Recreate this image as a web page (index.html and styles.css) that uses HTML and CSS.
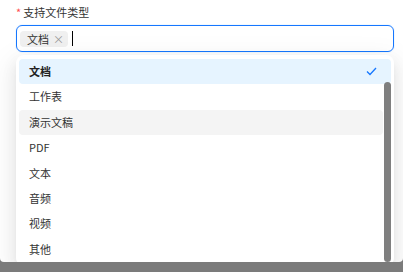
FILE: index.html
```html
<!DOCTYPE html>
<html lang="zh-CN">
<head>
    <meta charset="UTF-8">
    <title>支持文件类型</title>
    <link rel="stylesheet" href="styles.css">
</head>
<body>
    <div class="panel">
        <div class="form-item">
            <label class="form-label"><span class="required">*</span>支持文件类型</label>
            <div class="select-wrap">
                <div class="select">
                    <span class="tag">文档<span class="tag-close">×</span></span>
                    <span class="caret"></span>
                </div>
                <div class="dropdown">
                    <div class="option selected">文档
                        <svg class="check" width="11" height="9" viewBox="0 0 11 9">
                            <polyline points="1,4.5 4,7.5 10,1" fill="none" stroke="#1677ff" stroke-width="1.3"/>
                        </svg>
                    </div>
                    <div class="option">工作表</div>
                    <div class="option active">演示文稿</div>
                    <div class="option">PDF</div>
                    <div class="option">文本</div>
                    <div class="option">音频</div>
                    <div class="option">视频</div>
                    <div class="option">其他</div>
                    <div class="scrollbar"></div>
                </div>
            </div>
        </div>
    </div>
</body>
</html>
```

FILE: styles.css
```css
body {
    margin: 0;
    background-color: #7b7b7b;
    font-family: "Noto Sans CJK SC", "Noto Sans", sans-serif;
    font-size: 11px;
    color: #333;
}
.panel {
    height: 262px;
    background-color: #fff;
    border-radius: 0 0 4px 4px;
    padding: 4px 9px 0 16px;
    box-sizing: border-box;
}
.form-label {
    display: block;
    line-height: 16px;
    margin-bottom: 5px;
}
.required {
    color: #ff4d4f;
    margin-right: 2px;
}
.select-wrap {
    position: relative;
}
.select {
    height: 27px;
    border: 1px solid #1677ff;
    border-radius: 6px;
    box-sizing: border-box;
    padding: 0 3px;
    display: flex;
    align-items: center;
    box-shadow: 0 0 0 1px rgba(5, 145, 255, 0.05);
}
.tag {
    display: flex;
    align-items: center;
    height: 16px;
    line-height: 16px;
    padding: 0 4px 0 7px;
    background-color: #f0f0f0;
    border-radius: 4px;
    color: #333;
}
.tag-close {
    color: #999;
    font-size: 11px;
    margin-left: 4px;
}
.caret {
    width: 1px;
    height: 15px;
    background-color: #000;
    margin-left: 4px;
}
.dropdown {
    position: absolute;
    top: 30px;
    left: 0;
    right: 0;
    background-color: #fff;
    border-radius: 8px;
    padding: 4px 3px 4px 3px;
    box-shadow: 0 6px 16px 0 rgba(0, 0, 0, 0.08), 0 3px 6px -4px rgba(0, 0, 0, 0.12), 0 9px 28px 8px rgba(0, 0, 0, 0.05);
}
.option {
    height: 25.4px;
    line-height: 25.4px;
    padding: 0 10px;
    border-radius: 4px;
    display: flex;
    align-items: center;
    justify-content: space-between;
    margin-right: 8px;
}
.option.selected {
    background-color: #e6f4ff;
    font-weight: bold;
    color: #222;
    margin-right: 0;
    padding-right: 14px;
}
.option.active {
    background-color: #f4f4f4;
}
.scrollbar {
    position: absolute;
    right: 3px;
    top: 27px;
    bottom: 4px;
    width: 7px;
    border-radius: 4px;
    background-color: #7f7f7f;
}
```
